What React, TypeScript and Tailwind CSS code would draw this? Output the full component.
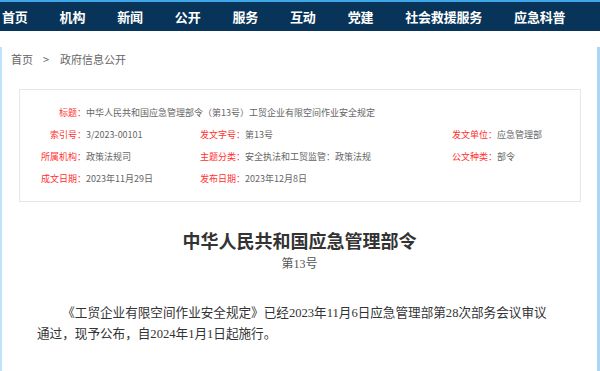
import React from "react";

const navItems = ["首页", "机构", "新闻", "公开", "服务", "互动", "党建", "社会救援服务", "应急科普"];

const sans = { fontFamily: '"Noto Sans CJK SC", "Noto Sans", sans-serif' };

function Label({ children }: { children: React.ReactNode }) {
  return <div className="text-right whitespace-nowrap text-[#ff3030]">{children}：</div>;
}

function Value({ children, className = "" }: { children: React.ReactNode; className?: string }) {
  return <div className={"whitespace-nowrap text-[#666] " + className}>{children}</div>;
}

export default function App() {
  return (
    <div className="w-[600px] h-[371px] overflow-hidden bg-white" style={sans}>
      <div className="h-[2px] bg-[#3ea6e6]" />
      <nav className="h-[29px] bg-[#083459] flex items-center pl-[2px] gap-[32px]">
        {navItems.map((item) => (
          <span key={item} className="text-white text-[13px] font-bold leading-none tracking-[-0.2px]">
            {item}
          </span>
        ))}
      </nav>

      <div className="h-[340px] border-l-2 border-r-[3px] border-l-[#bfe3fa] border-r-[#a9d8f6]">
        <div className="flex items-center h-[24px] mt-[16px] text-[11px] text-[#666] pl-[9px]">
          <span>首页</span>
          <span className="ml-[10px] mr-[11px]">&gt;</span>
          <span>政府信息公开</span>
        </div>

        <div className="ml-[17px] mt-[18px] w-[562px] border border-[#e6e6e6] pt-[12px] pb-[11px] text-[9px]">
          <div className="grid grid-cols-[66px_109px_50px_202px_50px_1fr] auto-rows-[22px] items-center">
            <Label>标题</Label>
            <Value className="col-span-5">中华人民共和国应急管理部令（第13号）工贸企业有限空间作业安全规定</Value>

            <Label>索引号</Label>
            <Value>3/2023-00101</Value>
            <Label>发文字号</Label>
            <Value>第13号</Value>
            <Label>发文单位</Label>
            <Value>应急管理部</Value>

            <Label>所属机构</Label>
            <Value>政策法规司</Value>
            <Label>主题分类</Label>
            <Value>安全执法和工贸监管：政策法规</Value>
            <Label>公文种类</Label>
            <Value>部令</Value>

            <Label>成文日期</Label>
            <Value>2023年11月29日</Value>
            <Label>发布日期</Label>
            <Value>2023年12月8日</Value>
            <div />
            <div />
          </div>
        </div>

        <div style={{ fontFamily: '"Liberation Serif", "Noto Sans CJK SC", serif' }}>
          <h1 className="mt-[27px] text-center text-[18px] leading-[26px] font-bold text-[#333]">
            中华人民共和国应急管理部令
          </h1>
          <p className="text-center text-[12px] leading-[18px] text-[#555]">第13号</p>
          <p className="mt-[30px] pl-[35px] pr-[42px] text-[12.6px] leading-[21px] text-[#333] indent-[2em]">
            《工贸企业有限空间作业安全规定》已经2023年11月6日应急管理部第28次部务会议审议通过，现予公布，自2024年1月1日起施行。
          </p>
        </div>
      </div>
    </div>
  );
}
